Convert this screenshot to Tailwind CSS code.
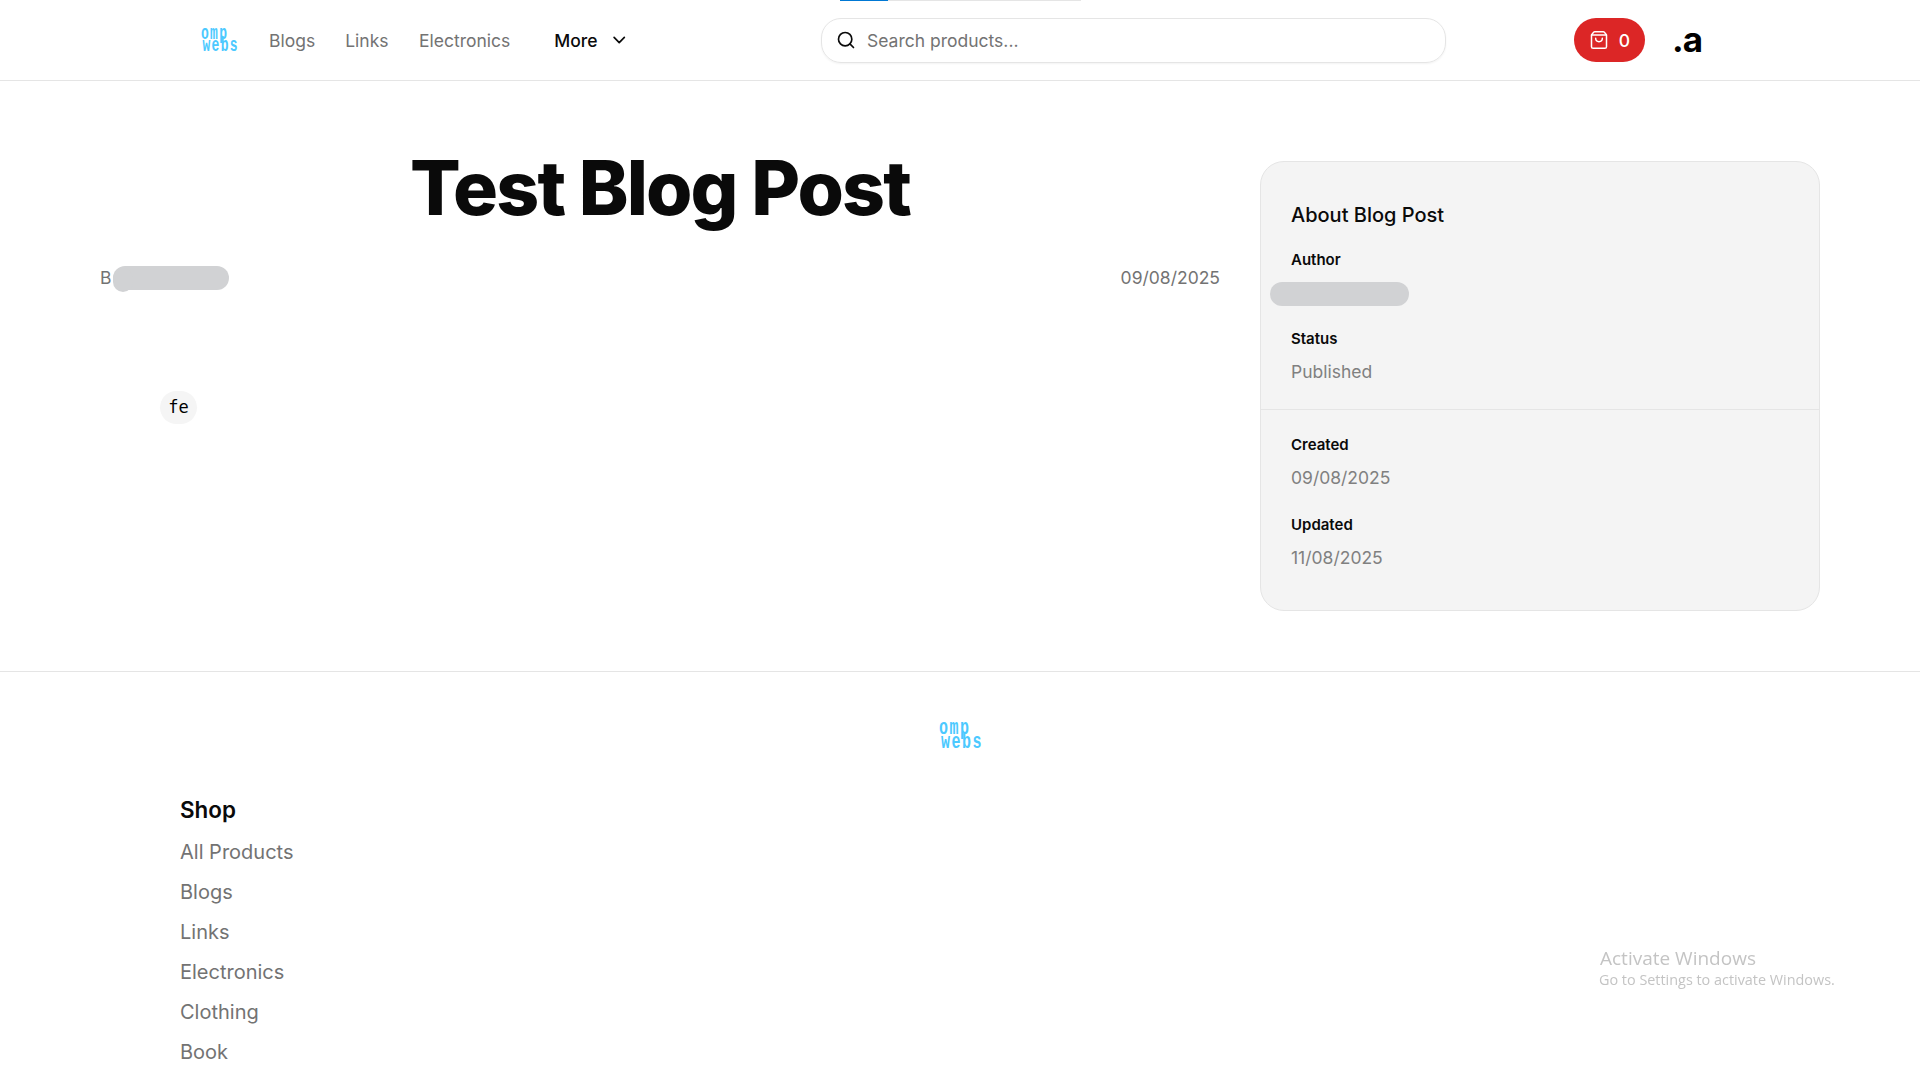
<!DOCTYPE html>
<html lang="en">
<head>
    <meta charset="UTF-8">
    <meta name="viewport" content="width=device-width, initial-scale=1.0">
    <title>Test Blog Post</title>
    <script src="https://cdn.jsdelivr.net/npm/@tailwindcss/browser@4"></script>
</head>
<body class="bg-white h-[1080px] overflow-hidden font-['Inter',sans-serif] text-[#0a0a0a]">
    <!-- Header -->
    <header class="relative h-[81px] border-b border-[#e5e5e5] flex items-center pl-[201px]">
        <div class="absolute top-0 left-[840px] w-[241px] h-px bg-[#e5e5e5]"><div class="w-[48px] h-px bg-[#0078d4]"></div></div>
        <a class="w-[36px] flex flex-col items-start font-['Liberation_Mono',monospace] font-bold text-[#4cc9ff] text-[13px] tracking-[1.3px] leading-[8px] scale-y-[1.5]">
            <span>omp</span><span class="ml-[1.5px]">webs</span>
        </a>
        <nav class="w-[360px] ml-[32px] pt-[2px] flex items-center text-[17.5px] text-[#737373]">
            <a>Blogs</a>
            <a class="ml-[30px]">Links</a>
            <a class="ml-[30.5px]">Electronics</a>
            <a class="ml-[44px] text-[#0a0a0a] font-medium">More</a>
            <svg class="ml-[11px] -mt-[2px]" width="24" height="24" viewBox="0 0 24 24" fill="none" stroke="#0a0a0a" stroke-width="2" stroke-linecap="round" stroke-linejoin="round"><path d="m6 9 6 6 6-6"/></svg>
        </nav>
        <div class="ml-[192px] w-[625px] h-[45px] rounded-[20px] border border-[#e5e5e5] shadow-xs flex items-center pl-[14px] text-[17.5px] text-[#737373]">
            <svg width="20" height="20" viewBox="0 0 24 24" fill="none" stroke="#0a0a0a" stroke-width="2" stroke-linecap="round" stroke-linejoin="round"><circle cx="11" cy="11" r="8"/><path d="m21 21-4.3-4.3"/></svg>
            <span class="ml-[11px] pt-[2px]">Search products...</span>
        </div>
        <div class="ml-[128px] w-[71px] h-[44px] rounded-[22px] bg-[#dc2626] flex items-center justify-center gap-[10px] text-white text-[17.5px] font-medium">
            <svg width="20" height="20" viewBox="0 0 24 24" fill="none" stroke="white" stroke-width="1.8" stroke-linecap="round" stroke-linejoin="round"><path d="M16 10a4 4 0 0 1-8 0"/><path d="M3.103 6.034h17.794"/><path d="M3.4 5.467a2 2 0 0 0-.4 1.2V20a2 2 0 0 0 2 2h14a2 2 0 0 0 2-2V6.667a2 2 0 0 0-.4-1.2l-2-2.667A2 2 0 0 0 17 2H7a2 2 0 0 0-1.6.8z"/></svg>
            <span class="pt-[2px]">0</span>
        </div>
        <div class="ml-[27px] -mt-[2px] text-[35px] leading-none font-bold text-black tracking-tight">.a</div>
    </header>

    <!-- Article + sidebar -->
    <main class="h-[591px] border-b border-[#e5e5e5] pl-[100px] flex items-start">
        <article class="w-[1120px] pt-[62px]">
            <h1 class="text-center text-[75px] leading-[90px] font-extrabold tracking-[-0.025em]">Test Blog Post</h1>
            <div class="mt-[32px] flex items-center justify-between text-[17.5px] leading-[26px] text-[#737373]">
                <div class="relative">B
                    <div class="absolute left-[13px] top-[1px] w-[116px] h-[24px] rounded-full bg-[#d1d2d4]"></div>
                    <div class="absolute left-[13px] top-[3px] w-[20px] h-[24px] rounded-full bg-[#d1d2d4]"></div>
                </div>
                <span>09/08/2025</span>
            </div>
            <div class="mt-[100px] ml-[60px] w-[37px] h-[33px] rounded-full bg-[#f5f5f5] flex items-center justify-center font-['DejaVu_Sans_Mono',monospace] text-[17px] text-black">fe</div>
        </article>
        <aside class="relative ml-[40px] mt-[80px] w-[560px] h-[450px] rounded-[24px] border border-[#e5e5e5] bg-[#f4f4f4]">
            <div class="h-[248px] border-b border-[#e5e5e5] px-[30px] pt-[39px]">
                <h2 class="text-[20px] leading-[28px] font-medium">About Blog Post</h2>
                <h3 class="mt-[21px] text-[15px] leading-[20px] font-semibold">Author</h3>
                <div class="-ml-[21px] mt-[12px] w-[139px] h-[24px] rounded-full bg-[#d1d2d4]"></div>
                <h3 class="mt-[23px] text-[15px] leading-[20px] font-semibold">Status</h3>
                <p class="mt-[11px] text-[17.5px] leading-[24px] text-[#808080]">Published</p>
            </div>
            <div class="px-[30px] pt-[25px]">
                <h3 class="text-[15px] leading-[20px] font-semibold">Created</h3>
                <p class="mt-[11px] text-[17.5px] leading-[24px] text-[#808080]">09/08/2025</p>
                <h3 class="mt-[25px] text-[15px] leading-[20px] font-semibold">Updated</h3>
                <p class="mt-[11px] text-[17.5px] leading-[24px] text-[#808080]">11/08/2025</p>
            </div>
        </aside>
    </main>

    <!-- Footer -->
    <footer class="pl-[180px]">
        <a class="ml-[759px] mt-[56px] w-[44px] flex flex-col items-start font-['Liberation_Mono',monospace] font-bold text-[#4cc9ff] text-[15px] tracking-[1.5px] leading-[8.5px] scale-y-[1.5]">
            <span>omp</span><span class="ml-[2px]">webs</span>
        </a>
        <h4 class="mt-[50px] text-[22.4px] leading-[30px] font-semibold">Shop</h4>
        <ul class="mt-[7px] text-[20px] leading-[40px] text-[#737373]">
            <li>All Products</li>
            <li>Blogs</li>
            <li>Links</li>
            <li>Electronics</li>
            <li>Clothing</li>
            <li>Book</li>
        </ul>
    </footer>

    <!-- Windows activation watermark -->
    <div class="fixed left-[1599px] top-[945px] font-['Open_Sans',sans-serif] text-[#c4c4c4]">
        <p class="ml-px text-[19px] leading-[26px]">Activate Windows</p>
        <p class="text-[14.4px] leading-[18px]">Go to Settings to activate Windows.</p>
    </div>
</body>
</html>
